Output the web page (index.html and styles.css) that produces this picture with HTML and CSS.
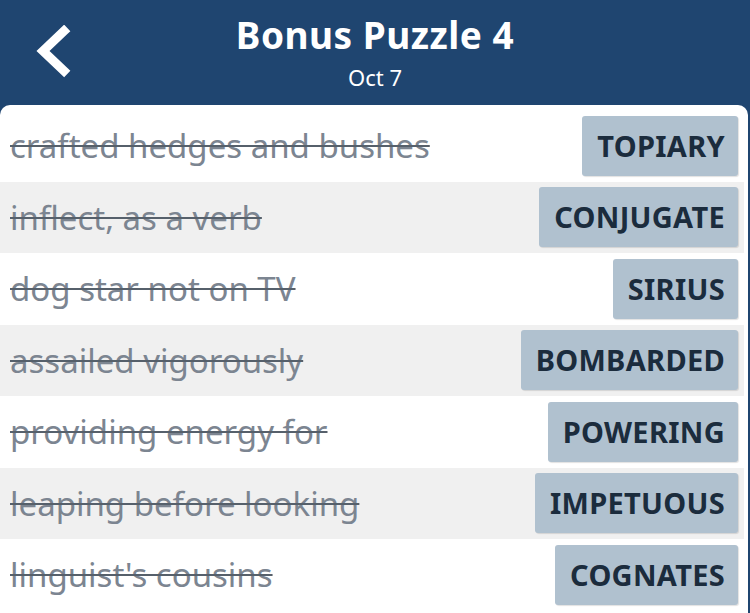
FILE: index.html
```html
<!DOCTYPE html>
<html lang="en">
<head>
    <meta charset="UTF-8">
    <meta name="viewport" content="width=device-width, initial-scale=1.0">
    <title>Bonus Puzzle 4</title>
    <link rel="stylesheet" href="styles.css">
</head>
<body>
<div class="header">
    <div class="back">
        <svg width="40" height="56" viewBox="0 0 40 56">
            <polyline points="30,6 9,26 30,46" fill="none" stroke="#fff" stroke-width="9" stroke-linecap="square" stroke-linejoin="miter"/>
        </svg>
    </div>
    <div class="title-box">
        <h1>Bonus Puzzle 4</h1>
        <div class="date">Oct 7</div>
    </div>
    <div></div>
</div>

<!-- clue list -->
<div class="card">
    <div class="row">
        <span class="clue">crafted hedges and bushes</span>
        <span class="answer">TOPIARY</span>
    </div>
    <div class="row alt">
        <span class="clue">inflect, as a verb</span>
        <span class="answer">CONJUGATE</span>
    </div>
    <div class="row">
        <span class="clue">dog star not on TV</span>
        <span class="answer">SIRIUS</span>
    </div>
    <div class="row alt">
        <span class="clue">assailed vigorously</span>
        <span class="answer">BOMBARDED</span>
    </div>
    <div class="row">
        <span class="clue">providing energy for</span>
        <span class="answer">POWERING</span>
    </div>
    <div class="row alt">
        <span class="clue">leaping before looking</span>
        <span class="answer">IMPETUOUS</span>
    </div>
    <div class="row">
        <span class="clue">linguist's cousins</span>
        <span class="answer">COGNATES</span>
    </div>
</div>
</body>
</html>
```

FILE: styles.css
```css
body {
    margin: 0;
    background-color: #1f4570;
    font-family: "Noto Sans", Lato, sans-serif;
    height: 613px;
    overflow: hidden;
}
.header {
    display: grid;
    grid-template-columns: 1fr auto 1fr;
    align-items: start;
    height: 105px;
    color: #fff;
}
.back {
    padding: 25px 0 0 34px;
}
.back svg {
    display: block;
}
.title-box {
    text-align: center;
    padding-top: 11px;
}
h1 {
    margin: 0;
    font-size: 37px;
    font-weight: 700;
    line-height: 48px;
    letter-spacing: 0.5px;
}
.date {
    font-size: 22px;
    line-height: 26px;
    margin-top: 5px;
}
/* list card */
.card {
    background-color: #fff;
    border-radius: 10px 10px 0 0;
    padding: 5px 4px 0 0;
    margin-right: 2px;
    height: 520px;
}
.row {
    display: flex;
    align-items: center;
    justify-content: space-between;
    height: 71.5px;
    padding: 0 6px 0 10px;
    box-sizing: border-box;
}
.row.alt {
    background-color: #f0f0f0;
}
.clue {
    font-size: 33px;
    color: #7c8591;
    text-decoration: line-through;
    text-decoration-color: #56606b;
    text-decoration-thickness: 2px;
}
.answer {
    background-color: #b0c1cf;
    color: #1b2c3d;
    font-size: 29px;
    font-weight: 700;
    height: 60px;
    line-height: 60px;
    padding: 0 13px 0 15px;
    border-radius: 3px;
    box-shadow: 1px 1px 1px rgba(0, 0, 0, 0.12);
    letter-spacing: 0.3px;
}
```
